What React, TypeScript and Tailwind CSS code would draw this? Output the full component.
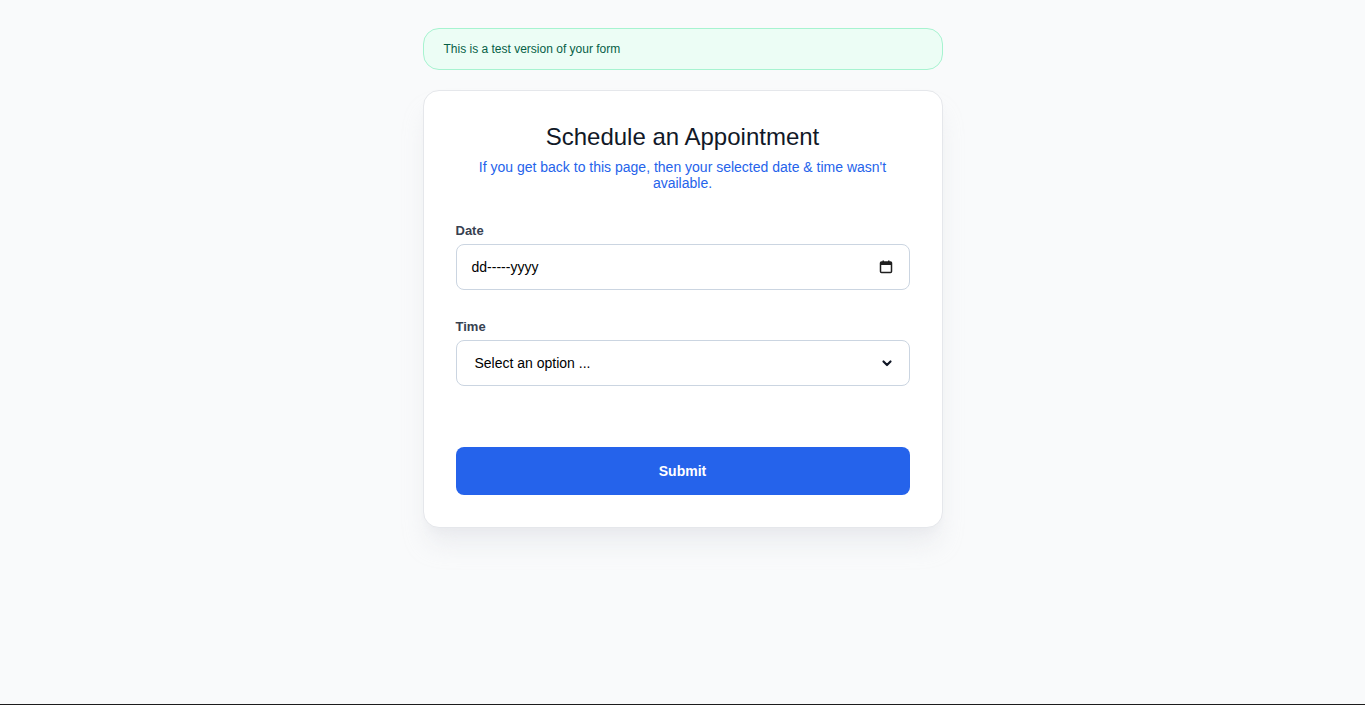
function CalendarIcon() {
  return (
    <svg width="14" height="14" viewBox="0 0 14 14" className="shrink-0">
      <rect x="1.5" y="2" width="11" height="10.5" rx="1" fill="none" stroke="#1f1f1f" strokeWidth="1.5" />
      <rect x="1.5" y="2" width="11" height="3" fill="#1f1f1f" />
      <rect x="3.5" y="0.5" width="1.5" height="2.5" fill="#1f1f1f" />
      <rect x="9" y="0.5" width="1.5" height="2.5" fill="#1f1f1f" />
    </svg>
  );
}

function Chevron() {
  return (
    <svg width="12" height="12" viewBox="0 0 12 12" className="shrink-0">
      <path d="M2.5 4.5 L6 8 L9.5 4.5" fill="none" stroke="#111827" strokeWidth="2.2" strokeLinecap="round" strokeLinejoin="round" />
    </svg>
  );
}

export default function App() {
  return (
    <div className="h-screen bg-[#f9fafb] border-b border-[#1c1c1c] font-['Liberation_Sans',Arial,sans-serif]">
      <div className="mx-auto w-[520px] pt-7">
        <div className="rounded-2xl border border-[#a7f3d0] bg-[#ecfdf5] px-5 py-[12px] text-xs text-[#065f46]">
          This is a test version of your form
        </div>

        <form
          className="mt-5 rounded-2xl border border-[#e5e7eb] bg-white p-8 shadow-xl shadow-gray-200/70"
          onSubmit={(e) => e.preventDefault()}
        >
          <h1 className="text-center text-2xl leading-[28px] text-[#111827]">Schedule an Appointment</h1>
          <p className="mt-2 px-4 text-center text-sm leading-4 text-[#2563eb]">
            If you get back to this page, then your selected date &amp; time wasn't available.
          </p>

          <div className="mt-[30px]">
            <label className="block text-[13px] font-bold text-[#374151]">Date</label>
            <div className="mt-[3px] flex h-[46px] items-center justify-between rounded-lg border border-[#cbd5e1] pl-[15px] pr-4 text-sm text-black">
              <span>dd-----yyyy</span>
              <CalendarIcon />
            </div>
          </div>

          <div className="mt-[27px]">
            <label className="block text-[13px] font-bold text-[#374151]">Time</label>
            <div className="mt-[4px] flex h-[46px] items-center justify-between rounded-lg border border-[#cbd5e1] pl-[18px] pr-4 text-sm text-black">
              <span>Select an option ...</span>
              <Chevron />
            </div>
          </div>

          <button
            type="submit"
            className="mt-[61px] h-12 w-full rounded-lg bg-[#2563eb] text-sm font-bold text-white"
          >
            Submit
          </button>
        </form>
      </div>
    </div>
  );
}
